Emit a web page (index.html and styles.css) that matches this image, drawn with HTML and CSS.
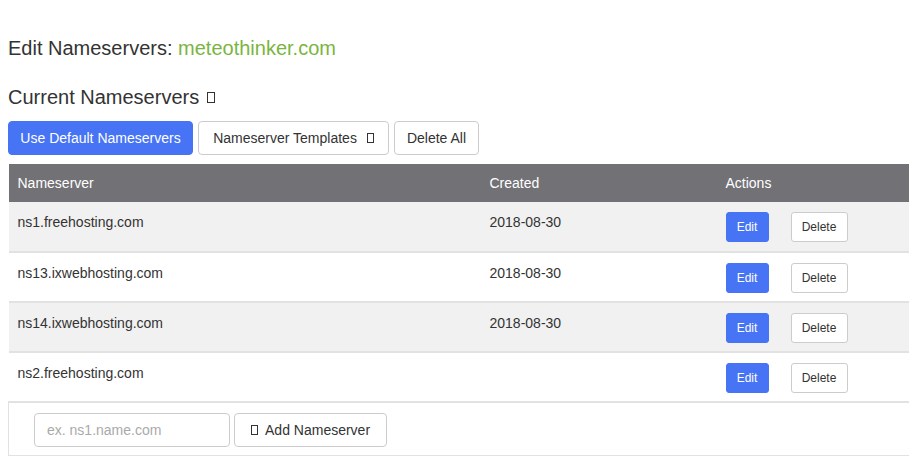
FILE: index.html
```html
<!DOCTYPE html>
<html>
<head>
<meta charset="utf-8">
<link rel="stylesheet" href="styles.css">
</head>
<body>
<div class="page">
  <h1 class="title">Edit Nameservers: <span class="domain">meteothinker.com</span></h1>
  <h2 class="subtitle">Current Nameservers <span class="tofu tofu-lg"></span></h2>
  <div class="toolbar">
    <button class="btn btn-primary btn-default-ns">Use Default Nameservers</button>
    <button class="btn btn-default btn-templates">Nameserver Templates <span class="tofu tofu-btn"></span></button>
    <button class="btn btn-default btn-delete-all">Delete All</button>
  </div>
  <table class="ns-table">
    <colgroup>
      <col class="c1"><col class="c2"><col class="c3">
    </colgroup>
    <thead>
      <tr><th>Nameserver</th><th>Created</th><th>Actions</th></tr>
    </thead>
    <tbody>
      <tr class="odd"><td>ns1.freehosting.com</td><td>2018-08-30</td><td class="actions"><button class="sm sm-primary">Edit</button><button class="sm sm-default">Delete</button></td></tr>
      <tr><td>ns13.ixwebhosting.com</td><td>2018-08-30</td><td class="actions"><button class="sm sm-primary">Edit</button><button class="sm sm-default">Delete</button></td></tr>
      <tr class="odd"><td>ns14.ixwebhosting.com</td><td>2018-08-30</td><td class="actions"><button class="sm sm-primary">Edit</button><button class="sm sm-default">Delete</button></td></tr>
      <tr><td>ns2.freehosting.com</td><td></td><td class="actions"><button class="sm sm-primary">Edit</button><button class="sm sm-default">Delete</button></td></tr>
      <tr class="add-row"><td colspan="3"><div class="add-form"><input class="ns-input" type="text" placeholder="ex. ns1.name.com"><button class="btn btn-default btn-add"><span class="tofu tofu-btn"></span> Add Nameserver</button></div></td></tr>
    </tbody>
  </table>
</div>
</body>
</html>
```
FILE: styles.css
```css
html, body {
  margin: 0;
  padding: 0;
  background: #fff;
  overflow: hidden;
}
body {
  font-family: "Liberation Sans", Arial, sans-serif;
  color: #333;
}
.page {
  padding: 0 0 0 8px;
}
.title {
  margin: 0;
  padding-top: 37px;
  font-size: 20px;
  font-weight: normal;
  line-height: 22px;
  color: #333;
}
.domain {
  color: #7ab53f;
}
.subtitle {
  margin: 0;
  padding-top: 27px;
  font-size: 20px;
  font-weight: normal;
  line-height: 22px;
  color: #333;
}
.tofu {
  display: inline-block;
  box-sizing: border-box;
  border: 1px solid #333;
  vertical-align: middle;
}
.tofu-lg {
  width: 8px;
  height: 11px;
  margin-left: 2px;
  position: relative;
  top: -1px;
}
.tofu-btn {
  width: 7px;
  height: 10px;
  margin-left: 6px;
  position: relative;
  top: -1px;
}
.toolbar {
  display: flex;
  gap: 5px;
  margin-top: 13px;
}
.btn {
  font-family: "Liberation Sans", Arial, sans-serif;
  font-size: 14px;
  height: 34px;
  padding: 0;
  border-radius: 4px;
  box-sizing: border-box;
  cursor: pointer;
  text-align: center;
}
.btn-default-ns { width: 185px; }
.btn-templates { width: 191px; }
.btn-delete-all { width: 85px; }
.btn-primary {
  background: #4773f5;
  border: 1px solid #4773f5;
  color: #fff;
}
.btn-default {
  background: #fff;
  border: 1px solid #ccc;
  color: #333;
}
.ns-table {
  margin-top: 9px;
  border-collapse: collapse;
  width: 901px;
  table-layout: fixed;
  font-size: 14px;
}
.c1 { width: 472px; }
.c2 { width: 236px; }
.ns-table th {
  background: #727175;
  color: #fff;
  font-weight: normal;
  text-align: left;
  height: 38px;
  padding: 0 9px;
  box-sizing: border-box;
}
.ns-table td {
  height: 50px;
  box-sizing: border-box;
  padding: 10px 9px 0;
  vertical-align: top;
  line-height: 20px;
  border-bottom: 2px solid #e2e2e2;
  color: #333;
}
.ns-table tr.odd td {
  background: #f1f1f1;
}
.ns-table td.actions {
  padding-top: 10px;
  white-space: nowrap;
}
.sm {
  font-family: "Liberation Sans", Arial, sans-serif;
  font-size: 12px;
  height: 30px;
  border-radius: 3px;
  box-sizing: border-box;
  padding: 0;
  vertical-align: top;
}
.sm-primary {
  background: #4773f5;
  border: 1px solid #4773f5;
  color: #fff;
  width: 43px;
  margin-right: 22px;
}
.sm-default {
  background: #fff;
  border: 1px solid #ccc;
  color: #333;
  width: 57px;
}
.ns-table tr.add-row td {
  height: 53px;
  padding: 10px 0 0 25px;
  border-left: 1px solid #e2e2e2;
  border-bottom: 1px solid #e2e2e2;
}
.add-form {
  display: flex;
  gap: 4px;
}
.ns-input {
  width: 196px;
  height: 34px;
  box-sizing: border-box;
  border: 1px solid #ccc;
  border-radius: 4px;
  padding: 0 12px;
  font-family: "Liberation Sans", Arial, sans-serif;
  font-size: 14px;
  color: #333;
}
.ns-input::placeholder {
  color: #aaa;
}
.btn-add {
  width: 153px;
}
.btn-add .tofu-btn {
  margin-left: 0;
  margin-right: 4px;
}
```
